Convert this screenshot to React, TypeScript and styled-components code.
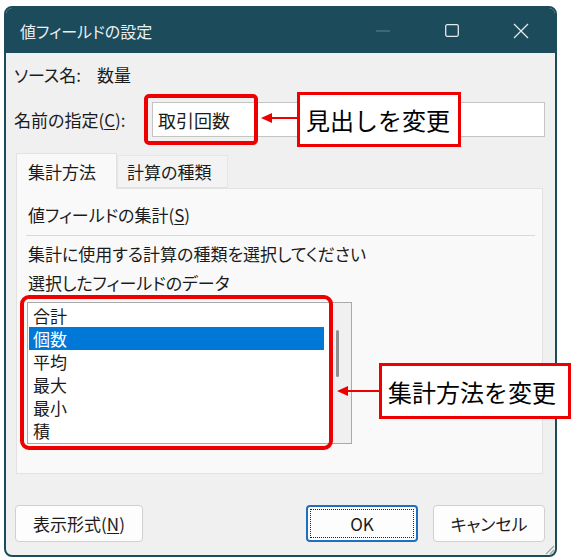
import React from "react";
import styled, { createGlobalStyle } from "styled-components";

const Global = createGlobalStyle`
  html, body { margin: 0; padding: 0; background: #ffffff; }
  body {
    font-family: "Noto Sans CJK JP", "Noto Sans", sans-serif;
    font-feature-settings: "palt";
    color: #1b1b1b;
  }
  * { box-sizing: border-box; }
`;

const Page = styled.div`
  position: relative;
  width: 583px;
  height: 559px;
  padding: 6px 0 0 4px;
`;

const Window = styled.div`
  position: relative;
  width: 553px;
  height: 551px;
  border: 2px solid #1c4b5b;
  border-radius: 8px;
  background: #f0f0f0;
  display: flex;
  flex-direction: column;
  overflow: hidden;
`;

const TitleBar = styled.div`
  height: 45px;
  flex: none;
  background: #1c4b5b;
  display: flex;
  align-items: center;
  padding-left: 14px;
`;

const TitleText = styled.div`
  flex: 1;
  color: #e9eff1;
  font-size: 16px;
  line-height: 20px;
`;

const CaptionButton = styled.div`
  width: 69px;
  height: 45px;
  display: flex;
  align-items: center;
  justify-content: center;
`;

const Body = styled.div`
  flex: 1;
  display: flex;
  flex-direction: column;
  padding: 10px 10px 13px 8px;
  font-size: 17px;
`;

const Row = styled.div<{ $gap?: number; $h: number }>`
  display: flex;
  align-items: center;
  height: ${(p) => p.$h}px;
  margin-top: ${(p) => p.$gap ?? 0}px;
`;

const Label = styled.div<{ $w: number }>`
  width: ${(p) => p.$w}px;
  flex: none;
  line-height: 24px;
  white-space: nowrap;
`;

const Value = styled.div`
  line-height: 24px;
`;

const U = styled.span`
  text-decoration: underline;
  text-underline-offset: 2px;
`;

const TextInput = styled.div`
  flex: 1;
  height: 35px;
  background: #ffffff;
  border: 1px solid #c4c4c4;
  display: flex;
  align-items: center;
  padding-left: 5px;
  font-size: 18px;
`;

const TabStrip = styled.div`
  display: flex;
  align-items: flex-end;
  height: 35px;
  margin: 16px 2px 0 2px;
  position: relative;
  z-index: 1;
`;

const Tab = styled.div<{ $active?: boolean; $w: number }>`
  width: ${(p) => p.$w}px;
  height: ${(p) => (p.$active ? 36 : 33)}px;
  margin-bottom: ${(p) => (p.$active ? -1 : 0)}px;
  background: ${(p) => (p.$active ? "#f9f9f9" : "#f3f3f3")};
  border: 1px solid ${(p) => (p.$active ? "#e2e2e2" : "#e6e6e6")};
  border-bottom: ${(p) => (p.$active ? "none" : "1px solid #e2e2e2")};
  display: flex;
  align-items: center;
  padding-left: ${(p) => (p.$active ? 11 : 9)}px;
  font-size: 17px;
`;

const Panel = styled.div`
  height: 286px;
  margin: 0 2px;
  background: #f9f9f9;
  border: 1px solid #e2e2e2;
  padding: 0 7px 0 11px;
  display: flex;
  flex-direction: column;
`;

const Line = styled.div<{ $top: number }>`
  line-height: 24px;
  margin-top: ${(p) => p.$top}px;
  white-space: nowrap;
`;

const Separator = styled.div`
  height: 1px;
  background: #d9d9d9;
  margin: 8px 0 0 -2px;
`;

const ListBox = styled.div`
  margin: 7px 0 0 -1px;
  width: 325px;
  height: 142px;
  background: #ffffff;
  border: 1px solid #a9a9a9;
  display: flex;
`;

const ListItems = styled.div`
  flex: 1;
  padding: 1px 9px 0 1px;
  display: flex;
  flex-direction: column;
`;

const ListItem = styled.div<{ $selected?: boolean }>`
  height: 23px;
  line-height: 23px;
  padding-left: 4px;
  background: ${(p) => (p.$selected ? "#0078d7" : "transparent")};
  color: ${(p) => (p.$selected ? "#ffffff" : "#1b1b1b")};
`;

const ScrollTrack = styled.div`
  width: 18px;
  background: #f0f0f0;
  display: flex;
  justify-content: flex-start;
  padding: 27px 0 0 3px;
`;

const ScrollThumb = styled.div`
  width: 3px;
  height: 47px;
  border-radius: 2px;
  background: #8f8f8f;
`;

const ButtonRow = styled.div`
  display: flex;
  align-items: center;
  margin-top: 31px;
  height: 37px;
  padding-left: 1px;
`;

const Spacer = styled.div`
  flex: 1;
`;

const Button = styled.div<{ $w: number; $default?: boolean }>`
  width: ${(p) => p.$w}px;
  height: 37px;
  margin-left: ${(p) => (p.$default ? 0 : 15)}px;
  background: #fdfdfd;
  border: ${(p) => (p.$default ? "2px solid #1f6fbf" : "1px solid #d0d0d0")};
  border-radius: 4px;
  display: flex;
  align-items: center;
  justify-content: center;
  font-size: 17px;
  outline: ${(p) => (p.$default ? "1px dotted #222" : "none")};
  outline-offset: -5px;
  &:first-child {
    margin-left: 0;
  }
`;

const Grip = styled.svg`
  position: absolute;
  right: 0;
  bottom: 0;
`;

const RedFrame = styled.div<{ $radius: number }>`
  position: absolute;
  border: 4px solid #ee0000;
  border-radius: ${(p) => p.$radius}px;
`;

const Callout = styled.div`
  position: absolute;
  background: #ffffff;
  border: 3px solid #ee0000;
  display: flex;
  align-items: center;
  padding-left: 6px;
  font-size: 24px;
  color: #000000;
  font-feature-settings: normal;
  white-space: nowrap;
`;

const Arrow = styled.svg`
  position: absolute;
`;

const ArrowLeft: React.FC<{ x: number; y: number; len: number }> = ({ x, y, len }) => (
  <Arrow style={{ left: x, top: y - 6 }} width={len} height={12} viewBox={`0 0 ${len} 12`}>
    <line x1={8} y1={6} x2={len} y2={6} stroke="#ee0000" strokeWidth={2} />
    <polygon points="0,6 11,1 11,11" fill="#ee0000" />
  </Arrow>
);

const items = ["合計", "個数", "平均", "最大", "最小", "積"];

export default function App() {
  return (
    <>
      <Global />
      <Page>
        <Window>
          <TitleBar>
            <TitleText>値フィールドの設定</TitleText>
            <CaptionButton>
              <svg width="14" height="2" viewBox="0 0 14 2">
                <line x1="0" y1="1" x2="14" y2="1" stroke="#5f8390" strokeWidth="1.2" />
              </svg>
            </CaptionButton>
            <CaptionButton>
              <svg width="14" height="13" viewBox="0 0 14 13">
                <rect x="0.7" y="0.7" width="12.6" height="11.6" rx="1.5" fill="none" stroke="#e4ebed" strokeWidth="1.3" />
              </svg>
            </CaptionButton>
            <CaptionButton>
              <svg width="16" height="16" viewBox="0 0 16 16">
                <path d="M1 1 L15 15 M15 1 L1 15" stroke="#e4ebed" strokeWidth="1.3" />
              </svg>
            </CaptionButton>
          </TitleBar>
          <Body>
            <Row $h={24}>
              <Label $w={83}>ソース名:</Label>
              <Value>数量</Value>
            </Row>
            <Row $h={35} $gap={15}>
              <Label $w={138}>
                名前の指定(<U>C</U>):
              </Label>
              <TextInput>取引回数</TextInput>
            </Row>
            <TabStrip>
              <Tab $active $w={101}>集計方法</Tab>
              <Tab $w={111}>計算の種類</Tab>
            </TabStrip>
            <Panel>
              <Line $top={14}>
                値フィールドの集計(<U>S</U>)
              </Line>
              <Separator />
              <Line $top={6}>集計に使用する計算の種類を選択してください</Line>
              <Line $top={5}>選択したフィールドのデータ</Line>
              <ListBox>
                <ListItems>
                  {items.map((it) => (
                    <ListItem key={it} $selected={it === "個数"}>
                      {it}
                    </ListItem>
                  ))}
                </ListItems>
                <ScrollTrack>
                  <ScrollThumb />
                </ScrollTrack>
              </ListBox>
            </Panel>
            <ButtonRow>
              <Button $w={128}>
                表示形式(<U>N</U>)
              </Button>
              <Spacer />
              <Button $w={112} $default>
                OK
              </Button>
              <Button $w={112}>キャンセル</Button>
            </ButtonRow>
          </Body>
          <Grip width="12" height="12" viewBox="0 0 12 12">
            <path d="M11 3 L3 11 M11 7 L7 11" stroke="#9aa8ad" strokeWidth="1.2" />
          </Grip>
        </Window>

        <RedFrame $radius={5} style={{ left: 144, top: 94, width: 114, height: 51 }} />
        <ArrowLeft x={261} y={118} len={37} />
        <Callout style={{ left: 297, top: 92, width: 164, height: 55 }}>見出しを変更</Callout>

        <RedFrame $radius={9} style={{ left: 20, top: 295, width: 313, height: 155 }} />
        <ArrowLeft x={337} y={391} len={43} />
        <Callout style={{ left: 379, top: 363, width: 192, height: 56 }}>集計方法を変更</Callout>
      </Page>
    </>
  );
}
